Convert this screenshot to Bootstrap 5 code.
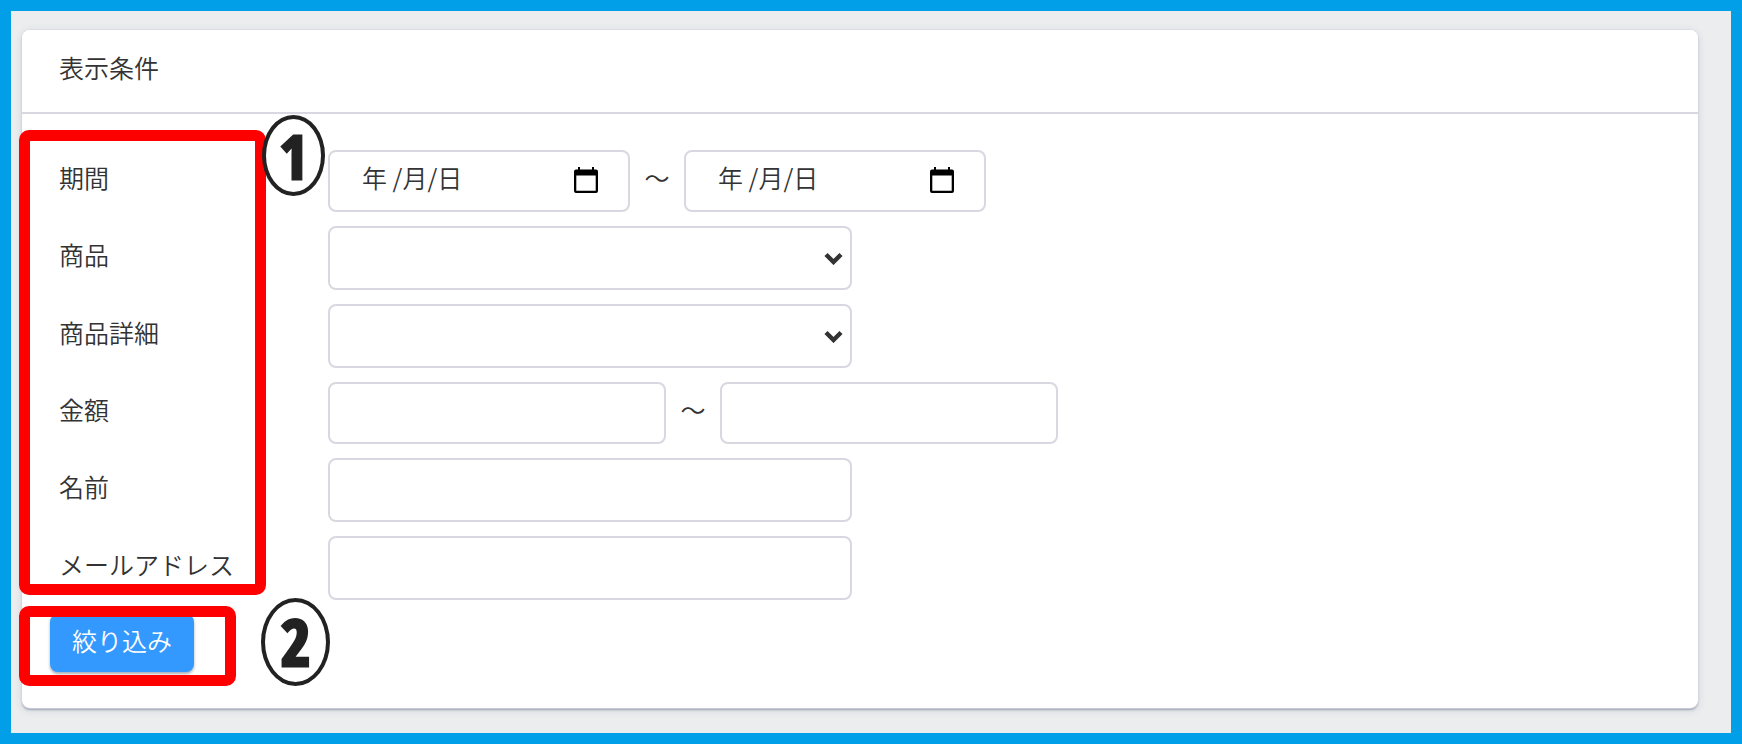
<!DOCTYPE html>
<html lang="ja">
<head>
<meta charset="utf-8">
<meta name="viewport" content="width=device-width, initial-scale=1">
<title>表示条件</title>
<link href="https://cdn.jsdelivr.net/npm/bootstrap@5.3.0/dist/css/bootstrap.min.css" rel="stylesheet">
<style>
  body {
    font-family: "Noto Sans CJK JP", sans-serif;
    font-weight: 350;
    font-size: 25px;
    line-height: 38px;
    color: #333;
    background: #ebedef;
  }
  .page-frame { min-height: 100vh; border: 11px solid #009fe8; padding: 19px 33px 25px 11px; }
  .filter-card {
    border: 0;
    border-radius: 8px;
    color: inherit;
    box-shadow: 0 0 0 1px rgba(216, 216, 228, .7), 0 2px 2px rgba(60, 75, 100, .4), 0 2px 8px rgba(60, 75, 100, .14);
  }
  .filter-card .card-header {
    background: #fff;
    border-bottom: 2px solid #d8d8e0;
    padding: 18px 37px 26px;
    border-radius: 8px 8px 0 0;
  }
  .filter-card .card-body { padding: 36px 28px; }
  .filter-rows { display: grid; gap: 14px; }
  .filter-row { display: flex; align-items: center; }
  .filter-label { width: 278px; flex: none; padding: 0 0 8px 9px; }
  .form-control, .form-select {
    height: 64px;
    border: 2px solid #d8d8e0;
    border-radius: 8px;
    padding: 6px 32px 14px;
    font-size: inherit;
    font-weight: inherit;
    line-height: inherit;
    color: #333;
  }
  .w-field { width: 524px; }
  .w-amount { width: 338px; height: 62px; }
  .date-field { width: 302px; position: relative; }
  .date-field .form-control { height: 62px; }
  .date-field button {
    position: absolute; top: 17px; right: 32px;
    padding: 0; border: 0; background: none; line-height: 0;
  }
  .form-select {
    background-image: url("data:image/svg+xml,%3Csvg xmlns='http://www.w3.org/2000/svg' viewBox='0 0 19 13'%3E%3Cpath d='M2 2.5l7.5 7.5L17 2.5' fill='none' stroke='%23333' stroke-width='4.4'/%3E%3C/svg%3E");
    background-size: 19px 13px;
    background-position: right 7px center;
  }
  .range-mark { width: 54px; text-align: center; padding-bottom: 8px; }
  .btn-filter {
    margin-top: 14px;
    width: 144px; height: 58px;
    padding: 0 0 6px;
    border: 0;
    border-radius: 8px;
    background: #39f;
    color: #fff;
    font-size: inherit; font-weight: inherit; line-height: inherit;
    box-shadow: 0 2px 3px rgba(60, 75, 100, .45);
  }
  /* Callouts laid over the form */
  .callout-box { position: absolute; border: 11px solid red; border-radius: 10px; pointer-events: none; }
  .callout-labels { left: -31px; top: -20px; bottom: 5px; width: 247px; }
  .callout-submit { left: -31px; top: 6px; bottom: -14px; width: 217px; }
  .callout-number {
    position: absolute;
    display: flex; align-items: center; justify-content: center;
    border: 4px solid #222; border-radius: 50%;
    color: #222;
    -webkit-text-stroke: 3px #222;
    font-family: "Open Sans Condensed", "Liberation Sans Narrow", "Open Sans", sans-serif;
    font-weight: 800;
    font-size: 60px; line-height: 1;
  }
  .callout-labels .callout-number { left: 232px; top: -26px; width: 63px; height: 81px; }
  .callout-submit .callout-number { left: 231px; top: -19px; width: 69px; height: 88px; font-size: 64px; }
</style>
</head>
<body>
<main class="page-frame">
  <div class="card filter-card">
    <div class="card-header">表示条件</div>
    <form class="card-body">
      <div class="filter-rows position-relative">
        <div class="filter-row">
          <label class="filter-label" for="dateFrom">期間</label>
          <div class="date-field">
            <input class="form-control" type="text" id="dateFrom" value="年 /月/日">
            <button type="button" aria-label="開始日を選択"><svg width="24" height="26" viewBox="0 0 24 26"><path fill="#000" fill-rule="evenodd" d="M4 0h2v2.500h12V0h2v2.500h2a2 2 0 0 1 2 2V24a2 2 0 0 1-2 2H2a2 2 0 0 1-2-2V4.500a2 2 0 0 1 2-2h2zM2.300 8.500v15.200h19.400V8.500z"/></svg></button>
          </div>
          <span class="range-mark">〜</span>
          <div class="date-field">
            <input class="form-control" type="text" id="dateTo" aria-label="期間の終了日" value="年 /月/日">
            <button type="button" aria-label="終了日を選択"><svg width="24" height="26" viewBox="0 0 24 26"><path fill="#000" fill-rule="evenodd" d="M4 0h2v2.500h12V0h2v2.500h2a2 2 0 0 1 2 2V24a2 2 0 0 1-2 2H2a2 2 0 0 1-2-2V4.500a2 2 0 0 1 2-2h2zM2.300 8.500v15.200h19.400V8.500z"/></svg></button>
          </div>
        </div>
        <div class="filter-row">
          <label class="filter-label" for="product">商品</label>
          <select class="form-select w-field" id="product"><option></option></select>
        </div>
        <div class="filter-row">
          <label class="filter-label" for="detail">商品詳細</label>
          <select class="form-select w-field" id="detail"><option></option></select>
        </div>
        <div class="filter-row">
          <label class="filter-label" for="amountMin">金額</label>
          <input class="form-control w-amount" type="text" id="amountMin">
          <span class="range-mark">〜</span>
          <input class="form-control w-amount" type="text" id="amountMax" aria-label="金額の上限">
        </div>
        <div class="filter-row">
          <label class="filter-label" for="customer">名前</label>
          <input class="form-control w-field" type="text" id="customer">
        </div>
        <div class="filter-row">
          <label class="filter-label" for="email">メールアドレス</label>
          <input class="form-control w-field" type="email" id="email">
        </div>
        <div class="callout-box callout-labels"><span class="callout-number">1</span></div>
      </div>
      <div class="d-flex position-relative">
        <button class="btn btn-filter" type="submit">絞り込み</button>
        <div class="callout-box callout-submit"><span class="callout-number">2</span></div>
      </div>
    </form>
  </div>
</main>
<script src="https://cdn.jsdelivr.net/npm/bootstrap@5.3.0/dist/js/bootstrap.bundle.min.js"></script>
</body>
</html>
